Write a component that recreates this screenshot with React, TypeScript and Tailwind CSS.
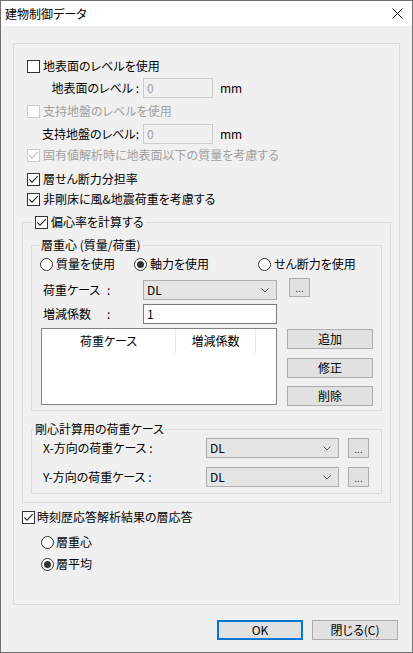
import React from "react";

function Check({ checked = false, disabled = false }: { checked?: boolean; disabled?: boolean }) {
  return (
    <span
      className={`w-[13px] h-[13px] shrink-0 border bg-white flex items-center justify-center ${
        disabled ? "border-[#cccccc]" : "border-[#333333]"
      }`}
    >
      {checked && (
        <svg width="11" height="11" viewBox="0 0 11 11">
          <path
            d="M1.2 5.3 L4 8.2 L9.8 2.2"
            fill="none"
            stroke={disabled ? "#bcbcbc" : "#222222"}
            strokeWidth="1.1"
          />
        </svg>
      )}
    </span>
  );
}

function Radio({ checked = false }: { checked?: boolean }) {
  return (
    <span className="w-[13px] h-[13px] shrink-0 rounded-full border border-[#333333] bg-white flex items-center justify-center">
      {checked && <span className="w-[7px] h-[7px] rounded-full bg-[#333333]" />}
    </span>
  );
}

function Chevron() {
  return (
    <svg width="8" height="5" viewBox="0 0 8 5">
      <path d="M0.5 0.5 L4 4 L7.5 0.5" fill="none" stroke="#555555" strokeWidth="1" />
    </svg>
  );
}

function Combo({ w }: { w: string }) {
  return (
    <div className={`${w} h-[20px] shrink-0 border border-[#adadad] bg-[#e5e5e5] flex items-center justify-between pl-[3px] pr-[7px]`}>
      <span>DL</span>
      <Chevron />
    </div>
  );
}

function Dots({ h }: { h: string }) {
  return (
    <div className={`w-[21px] ${h} shrink-0 border border-[#adadad] bg-[#e1e1e1] flex items-end justify-center pb-[3px] text-[10px] leading-[10px] text-[#333333]`}>
      ...
    </div>
  );
}

function Btn({ children, cls = "" }: { children: React.ReactNode; cls?: string }) {
  return (
    <div className={`w-[86px] h-[20px] border border-[#adadad] bg-[#e1e1e1] flex items-center justify-center ${cls}`}>
      {children}
    </div>
  );
}

export default function App() {
  return (
    <div className="w-[413px] h-[653px] border border-[#707070] bg-[#f0f0f0] flex flex-col font-['Noto_Sans_CJK_JP',sans-serif] [font-feature-settings:'palt'] text-[12px] leading-[16px] text-black overflow-hidden">
      {/* title bar */}
      <div className="h-[25px] shrink-0 bg-white flex items-center justify-between pl-[4px] pr-[9px]">
        <span>建物制御データ</span>
        <svg width="11" height="11" viewBox="0 0 11 11">
          <path d="M0.5 0.5 L10.5 10.5 M10.5 0.5 L0.5 10.5" stroke="#000000" strokeWidth="1" />
        </svg>
      </div>

      {/* main group */}
      <div className="mt-[17px] ml-[12px] w-[387px] h-[562px] shrink-0 border border-[#dcdcdc] px-[8px] flex flex-col">
        <div className="mt-[14px] ml-[5px] h-[16px] flex items-center gap-[3px]">
          <Check />
          <span>地表面のレベルを使用</span>
        </div>
        <div className="mt-[4px] h-[20px] flex items-center">
          <span className="w-[121px] pr-[4px] text-right">地表面のレベル :</span>
          <div className="w-[70px] h-[20px] border border-[#cccccc] bg-[#f0f0f0] text-[#a0a0a0] pl-[3px] flex items-center">0</div>
          <span className="ml-[7px]">mm</span>
        </div>
        <div className="mt-[5px] ml-[5px] h-[16px] flex items-center gap-[3px] text-[#a0a0a0]">
          <Check disabled />
          <span>支持地盤のレベルを使用</span>
        </div>
        <div className="mt-[5px] h-[20px] flex items-center">
          <span className="w-[121px] pr-[4px] text-right">支持地盤のレベル:</span>
          <div className="w-[70px] h-[20px] border border-[#cccccc] bg-[#f0f0f0] text-[#a0a0a0] pl-[3px] flex items-center">0</div>
          <span className="ml-[7px]">mm</span>
        </div>
        <div className="mt-[3px] ml-[5px] h-[16px] flex items-center gap-[3px] text-[#a0a0a0]">
          <Check checked disabled />
          <span>固有値解析時に地表面以下の質量を考慮する</span>
        </div>
        <div className="mt-[8px] ml-[5px] h-[16px] flex items-center gap-[3px]">
          <Check checked />
          <span>層せん断力分担率</span>
        </div>
        <div className="mt-[4px] ml-[5px] h-[16px] flex items-center gap-[3px]">
          <Check checked />
          <span>非剛床に風&amp;地震荷重を考慮する</span>
        </div>

        {/* 偏心率 group */}
        <fieldset className="mt-[7px] border border-[#dcdcdc] px-[8px] pb-[8px]">
          <legend className="ml-[2px] px-[2px] h-[16px] flex items-center gap-[3px]">
            <Check checked />
            <span>偏心率を計算する</span>
          </legend>

          <fieldset className="mt-[7px] border border-[#dcdcdc] px-[8px] pb-[4px]">
            <legend className="px-[1px] h-[16px]">層重心 (質量/荷重)</legend>
            <div className="mt-[3px] h-[16px] flex items-center">
              <div className="w-[94px] flex items-center gap-[3px]">
                <Radio />
                <span>質量を使用</span>
              </div>
              <div className="w-[124px] flex items-center gap-[3px]">
                <Radio checked />
                <span>軸力を使用</span>
              </div>
              <div className="flex items-center gap-[3px]">
                <Radio />
                <span>せん断力を使用</span>
              </div>
            </div>
            <div className="mt-[6px] flex items-start">
              <div className="mt-[2px] h-[20px] w-[103px] pl-[3px] flex items-center">
                <span className="w-[64px]">荷重ケース</span>
                <span>:</span>
              </div>
              <div className="mt-[2px]">
                <Combo w="w-[134px]" />
              </div>
              <div className="ml-[12px]">
                <Dots h="h-[19px]" />
              </div>
            </div>
            <div className="mt-[4px] h-[20px] flex items-center">
              <div className="w-[103px] pl-[3px] flex items-center">
                <span className="w-[64px]">増減係数</span>
                <span>:</span>
              </div>
              <div className="w-[134px] h-[20px] border border-[#7a7a7a] bg-white pl-[3px] flex items-center">1</div>
            </div>
            <div className="mt-[4px] flex items-start">
              <div className="ml-[1px] w-[236px] h-[77px] border border-[#828282] bg-white flex flex-col">
                <div className="h-[24px] flex">
                  <div className="w-[134px] border-r border-[#e5e5e5] flex items-center justify-center">荷重ケース</div>
                  <div className="w-[80px] border-r border-[#e5e5e5] flex items-center justify-center">増減係数</div>
                </div>
              </div>
              <div className="ml-[10px] flex flex-col">
                <Btn cls="mt-[1px]">追加</Btn>
                <Btn cls="mt-[9px]">修正</Btn>
                <Btn cls="mt-[8px]">削除</Btn>
              </div>
            </div>
          </fieldset>

          <fieldset className="mt-[10px] border border-[#dcdcdc] pl-[2px] pr-[8px] pb-[6px]">
            <legend className="px-[1px] h-[16px]">剛心計算用の荷重ケース</legend>
            <div className="mt-[1px] h-[20px] flex items-center">
              <span className="w-[172px] pl-[9px]">X-方向の荷重ケース :</span>
              <Combo w="w-[133px]" />
              <div className="ml-[9px]">
                <Dots h="h-[20px]" />
              </div>
            </div>
            <div className="mt-[9px] h-[20px] flex items-center">
              <span className="w-[172px] pl-[9px]">Y-方向の荷重ケース :</span>
              <Combo w="w-[133px]" />
              <div className="ml-[9px]">
                <Dots h="h-[20px]" />
              </div>
            </div>
          </fieldset>
        </fieldset>

        <div className="mt-[6px] h-[16px] flex items-center gap-[2px]">
          <Check checked />
          <span>時刻歴応答解析結果の層応答</span>
        </div>
        <div className="mt-[9px] ml-[19px] h-[16px] flex items-center gap-[2px]">
          <Radio />
          <span>層重心</span>
        </div>
        <div className="mt-[6px] ml-[19px] h-[16px] flex items-center gap-[2px]">
          <Radio checked />
          <span>層平均</span>
        </div>
      </div>

      {/* bottom buttons */}
      <div className="mt-[15px] flex justify-end gap-[9px] pr-[14px]">
        <div className="w-[86px] h-[20px] border-2 border-[#0078d7] bg-[#e1e1e1] flex items-center justify-center">OK</div>
        <div className="w-[86px] h-[20px] border border-[#adadad] bg-[#e1e1e1] flex items-center justify-center">閉じる(C)</div>
      </div>
    </div>
  );
}
